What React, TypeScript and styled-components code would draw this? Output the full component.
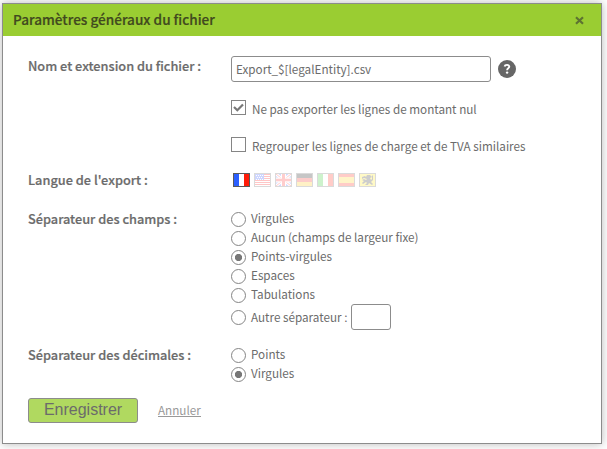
import React from "react";
import styled, { createGlobalStyle, css } from "styled-components";

const Global = createGlobalStyle`
  *, *::before, *::after { box-sizing: border-box; }
  html, body { margin: 0; background: #fff; }
  body {
    overflow: hidden;
    font-family: "Noto Sans CJK SC", "Noto Sans", sans-serif;
    font-size: 11.7px;
    color: #6b6b6b;
  }
`;

const Page = styled.main`
  height: 449px;
  padding: 3px 5px 5px 2px;
`;

const Dialog = styled.section`
  width: 600px;
  height: 441px;
  background: #fff;
  border: 1px solid #8c8c8c;
  box-shadow: 0 0 9px rgba(0, 0, 0, 0.28);
`;

const Header = styled.header`
  display: flex;
  align-items: flex-start;
  justify-content: space-between;
  height: 32px;
  padding: 0 17px 0 10px;
  background: #9acd32;
  color: #41491f;
`;

const Title = styled.h1`
  margin: 0;
  font-size: 13.6px;
  line-height: 31px;
  font-weight: 500;
  -webkit-text-stroke: 0.2px currentColor;
  white-space: nowrap;
`;

const Close = styled.button`
  display: flex;
  margin: 12px 0 0;
  padding: 0;
  border: 0;
  background: none;
`;

const Form = styled.form`
  padding: 20px 25px 0;
`;

const Row = styled.div<{ $gap: number }>`
  display: grid;
  grid-template-columns: 203px 1fr;
  align-items: start;
  margin-bottom: ${(p) => p.$gap}px;
`;

const Label = styled.span<{ $top?: number }>`
  margin-top: ${(p) => p.$top ?? 0}px;
  font-size: 12.75px;
  line-height: 14px;
  font-weight: 500;
  -webkit-text-stroke: 0.2px currentColor;
  white-space: nowrap;
`;

const Inline = styled.div`
  display: flex;
  align-items: center;
`;

const field = css`
  height: 26px;
  border: 1px solid #8c8c8c;
  border-radius: 3px;
  background: #fff;
  color: inherit;
  font: inherit;
  outline: 0;
`;

const FileName = styled.input`
  ${field}
  width: 260px;
  margin-right: 7px;
  padding: 0 4px 2px;
`;

const Separator = styled.input`
  ${field}
  width: 40px;
`;

const Stack = styled.div`
  grid-column: 2;
  display: flex;
  flex-direction: column;
`;

const Option = styled.label<{ $gap?: number }>`
  display: flex;
  align-items: flex-start;
  height: 15px;
  margin-bottom: ${(p) => p.$gap ?? 4}px;
`;

const OtherOption = styled(Option)`
  height: 26px;
  margin: -3px 0 0;
  align-items: center;
`;

const Caption = styled.span<{ $top?: number; $left?: number; $width?: number }>`
  margin: ${(p) => p.$top ?? -1}px 0 0 ${(p) => p.$left ?? 5}px;
  width: ${(p) => (p.$width ? `${p.$width}px` : "auto")};
  line-height: 14px;
  white-space: nowrap;
`;

const CheckBox = styled.span`
  flex: none;
  display: flex;
  width: 15px;
  height: 15px;
  border: 1px solid #858585;
`;

const RadioMark = styled.span<{ $on?: boolean }>`
  flex: none;
  width: 15px;
  height: 15px;
  border: 1px solid #858585;
  border-radius: 50%;
  background: ${(p) => (p.$on ? "radial-gradient(circle, #777 3.2px, #fff 4px)" : "#fff")};
`;

const Flags = styled.div`
  display: flex;
  gap: 4px;
  padding-left: 2px;
`;

const Flag = styled.svg<{ $active?: boolean }>`
  display: block;
  width: 17px;
  height: 14px;
  opacity: ${(p) => (p.$active ? 1 : 0.22)};
`;

const Actions = styled.div`
  display: flex;
  align-items: flex-start;
`;

const Save = styled.button`
  width: 110px;
  height: 25px;
  padding: 0 0 2px;
  border: 1px solid #8c8c8c;
  border-radius: 3px;
  background: #b0d960;
  color: #6b6b6b;
  font: 16px/19px "Liberation Sans", Arial, sans-serif;
`;

const Cancel = styled.a`
  margin: 4px 0 0 20px;
  height: 15px;
  border-bottom: 1px solid #999;
  color: #999;
  line-height: 16px;
`;

const flagArt: Record<string, React.ReactNode> = {
  fr: (
    <>
      <path fill="#2b5fff" d="M1 1h5v12H1z" />
      <path fill="#fff" d="M6 1h5v12H6z" />
      <path fill="#ff1c08" d="M11 1h5v12h-5z" />
    </>
  ),
  us: (
    <>
      <path fill="#fff" d="M1 1h15v12H1z" />
      <path stroke="#f00" d="M1 1.5h15M1 3.5h15M1 5.5h15M1 7.5h15M1 9.5h15M1 11.5h15" />
      <path fill="#2448ff" d="M1 1h9v6H1z" />
      <path stroke="#fff" strokeDasharray="1 1" d="M2 2.5h7M3 4.5h6M2 6.5h7" />
    </>
  ),
  gb: (
    <>
      <path fill="#2448ff" d="M1 1h15v12H1z" />
      <path stroke="#fff" strokeWidth="3" d="M1 1l15 12M16 1L1 13" />
      <path stroke="#f22" d="M1 1l15 12M16 1L1 13" />
      <path stroke="#fff" strokeWidth="5" d="M8.5 1v12M1 7h15" />
      <path stroke="#f22" strokeWidth="3" d="M8.5 1v12" />
      <path stroke="#f22" strokeWidth="2.6" d="M1 7h15" />
    </>
  ),
  de: (
    <>
      <path fill="#000" d="M1 1h15v4H1z" />
      <path fill="#f31c12" d="M1 5h15v4H1z" />
      <path fill="#ffc400" d="M1 9h15v4H1z" />
    </>
  ),
  it: (
    <>
      <path fill="#22c51d" d="M1 1h5v12H1z" />
      <path fill="#fff" d="M6 1h5v12H6z" />
      <path fill="#ff1c08" d="M11 1h5v12h-5z" />
    </>
  ),
  es: (
    <>
      <path fill="#ff1c08" d="M1 1h15v12H1z" />
      <path fill="#ffcf10" d="M1 4h15v6H1z" />
    </>
  ),
  vl: (
    <>
      <path fill="#ffe800" d="M1 1h15v12H1z" />
      <path
        fill="#222"
        d="M8 2l3 0 2 2-2 1 1 2 1-1V3l1-1v5l-2 2 2 2-1 1-3-2-1 2H6l2-2-1-1-3 2-1-1 2-2-2-1 2-1 2 1 1-1-3-1-2 1V4l3-1 1 1z"
      />
    </>
  ),
};

const Radio = ({ on, children }: { on?: boolean; children: string }) => (
  <Option>
    <RadioMark $on={on} />
    <Caption>{children}</Caption>
  </Option>
);

export default function App() {
  return (
    <>
      <Global />
      <Page>
        <Dialog>
          <Header>
            <Title>Paramètres généraux du fichier</Title>
            <Close type="button" aria-label="Fermer">
              <svg width="9" height="9" viewBox="0 0 9 9" stroke="#5d7332" strokeWidth="2.2">
                <path d="M1 1.2l7 6.6M8 1.2L1 7.8" />
              </svg>
            </Close>
          </Header>
          <Form>
            <Row $gap={18}>
              <Label $top={3}>Nom et extension du fichier :</Label>
              <Inline>
                <FileName defaultValue="Export_$[legalEntity].csv" />
                <svg width="18" height="18" viewBox="0 0 18 18">
                  <circle cx="9" cy="9" r="9" fill="#666" />
                  <path d="M6.6 6.5C7 4.4 11.4 4.3 11.3 6.8C11.2 8.3 9.1 8.3 9.1 10.2" fill="none" stroke="#fff" strokeWidth="1.9" />
                  <circle cx="9.1" cy="12.6" r="1.2" fill="#fff" />
                </svg>
              </Inline>
            </Row>
            <Row $gap={21}>
              <Stack>
                <Option $gap={22}>
                  <CheckBox>
                    <svg width="13" height="13" viewBox="0 0 13 13">
                      <path d="M2 6l3.3 3.2L11 3.4" fill="none" stroke="#777" strokeWidth="2.2" />
                    </svg>
                  </CheckBox>
                  <Caption $left={6} $top={2}>Ne pas exporter les lignes de montant nul</Caption>
                </Option>
                <Option $gap={0}>
                  <CheckBox />
                  <Caption $left={6} $top={2}>Regrouper les lignes de charge et de TVA similaires</Caption>
                </Option>
              </Stack>
            </Row>
            <Row $gap={25}>
              <Label>Langue de l'export :</Label>
              <Flags>
                {Object.entries(flagArt).map(([code, art]) => (
                  <Flag key={code} $active={code === "fr"} viewBox="0 0 17 14">
                    {art}
                    <rect x=".5" y=".5" width="16" height="13" fill="none" stroke="#5a5a5a" />
                  </Flag>
                ))}
              </Flags>
            </Row>
            <Row $gap={18}>
              <Label>Séparateur des champs :</Label>
              <Stack>
                <Radio>Virgules</Radio>
                <Radio>Aucun (champs de largeur fixe)</Radio>
                <Radio on>Points-virgules</Radio>
                <Radio>Espaces</Radio>
                <Radio>Tabulations</Radio>
                <OtherOption>
                  <RadioMark />
                  <Caption $width={100}>Autre séparateur :</Caption>
                  <Separator />
                </OtherOption>
              </Stack>
            </Row>
            <Row $gap={12}>
              <Label>Séparateur des décimales :</Label>
              <Stack>
                <Radio>Points</Radio>
                <Radio on>Virgules</Radio>
              </Stack>
            </Row>
            <Actions>
              <Save type="button">Enregistrer</Save>
              <Cancel>Annuler</Cancel>
            </Actions>
          </Form>
        </Dialog>
      </Page>
    </>
  );
}
